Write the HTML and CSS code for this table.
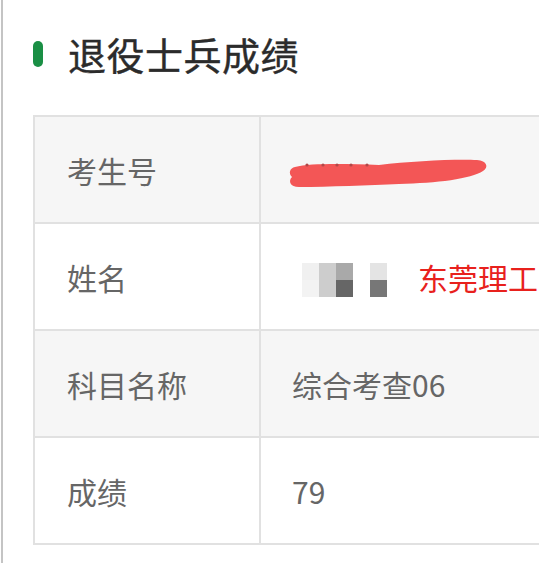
FILE: index.html
```html
<!DOCTYPE html>
<html lang="zh-CN">
<head>
<meta charset="utf-8">
<title>退役士兵成绩</title>
<link rel="stylesheet" href="styles.css">
</head>
<body>
<div class="page">
  <header class="title-row">
    <span class="title-mark"></span>
    <h1 class="title">退役士兵成绩</h1>
  </header>
  <div class="table-clip">
    <table class="score-table">
      <tr class="row-alt">
        <td class="label">考生号</td>
        <td class="value">
          <svg class="scribble" width="204" height="36" viewBox="0 0 204 36">
            <path d="M8,12 C24,8 60,9 92,10 C124,6 168,4 190,5 C200,6 202,12 196,16 C184,24 150,28 112,29 C82,30 42,32 12,32 C3,32 1,26 5,22 C1,18 3,13 8,12 Z" fill="#f35656"/>
            <g fill="#b24848">
              <circle cx="20" cy="10" r="1.6"/><circle cx="36" cy="10" r="1.6"/><circle cx="50" cy="10" r="1.6"/><circle cx="64" cy="10" r="1.6"/><circle cx="80" cy="10" r="1.6"/>
            </g>
          </svg>
        </td>
      </tr>
      <tr>
        <td class="label">姓名</td>
        <td class="value">
          <div class="name-cell">
            <div class="mosaic">
              <span class="m1"></span><span class="m2"></span><span class="m3"></span><span class="m0"></span><span class="m5"></span>
              <span class="m6"></span><span class="m2"></span><span class="m8"></span><span class="m0"></span><span class="m9"></span>
            </div>
            <span class="school">东莞理工</span>
          </div>
        </td>
      </tr>
      <tr class="row-alt">
        <td class="label">科目名称</td>
        <td class="value">综合考查06</td>
      </tr>
      <tr>
        <td class="label">成绩</td>
        <td class="value">79</td>
      </tr>
    </table>
  </div>
</div>
</body>
</html>
```
FILE: styles.css
```css
html, body {
  margin: 0;
  padding: 0;
  background: #ffffff;
  overflow: hidden;
}
body {
  width: 539px;
  height: 563px;
  font-family: "Noto Sans CJK SC", "Noto Sans", sans-serif;
}
.page {
  margin-left: 1px;
  border-left: 2px solid #c4c4c4;
  height: 563px;
  padding-left: 30px;
  box-sizing: border-box;
}
.title-row {
  display: flex;
  align-items: center;
  height: 108px;
}
.title-mark {
  width: 10px;
  height: 26px;
  border-radius: 5px;
  background: #1a8f45;
  margin-right: 25px;
}
.title {
  margin: 0;
  font-size: 38px;
  font-weight: 400;
  color: #2b2b2b;
  line-height: 42px;
  letter-spacing: 0.5px;
  -webkit-text-stroke: 0.4px #2b2b2b;
}
.table-clip {
  width: 506px;
  overflow: hidden;
  margin-top: 7px;
}
.score-table {
  border-collapse: collapse;
  width: 520px;
}
.score-table td {
  border: 2px solid #e1e1e1;
  height: 105px;
  padding: 0;
  font-size: 30px;
  color: #666666;
  vertical-align: middle;
}
.row-alt td {
  background: #f6f6f6;
}
.label {
  width: 192px;
  padding-left: 32px !important;
}
.value {
  padding-left: 31px !important;
}
.scribble {
  display: block;
  margin-left: -5px;
  margin-top: 6px;
}
.name-cell {
  display: flex;
  align-items: center;
}
.mosaic {
  display: grid;
  grid-template-columns: repeat(5, 17px);
  grid-template-rows: repeat(2, 17px);
  margin-left: 10px;
  margin-top: 6px;
}
.mosaic span { display: block; }
.m0 { background: transparent; }
.m1 { background: #f0f0f0; }
.m2 { background: #cdcdcd; }
.m3 { background: #a9a9a9; }
.m5 { background: #e4e4e4; }
.m6 { background: #f3f3f3; }
.m8 { background: #666666; }
.m9 { background: #777777; }
.school {
  margin-left: 31px;
  color: #e8211d;
  font-size: 30px;
}
```
